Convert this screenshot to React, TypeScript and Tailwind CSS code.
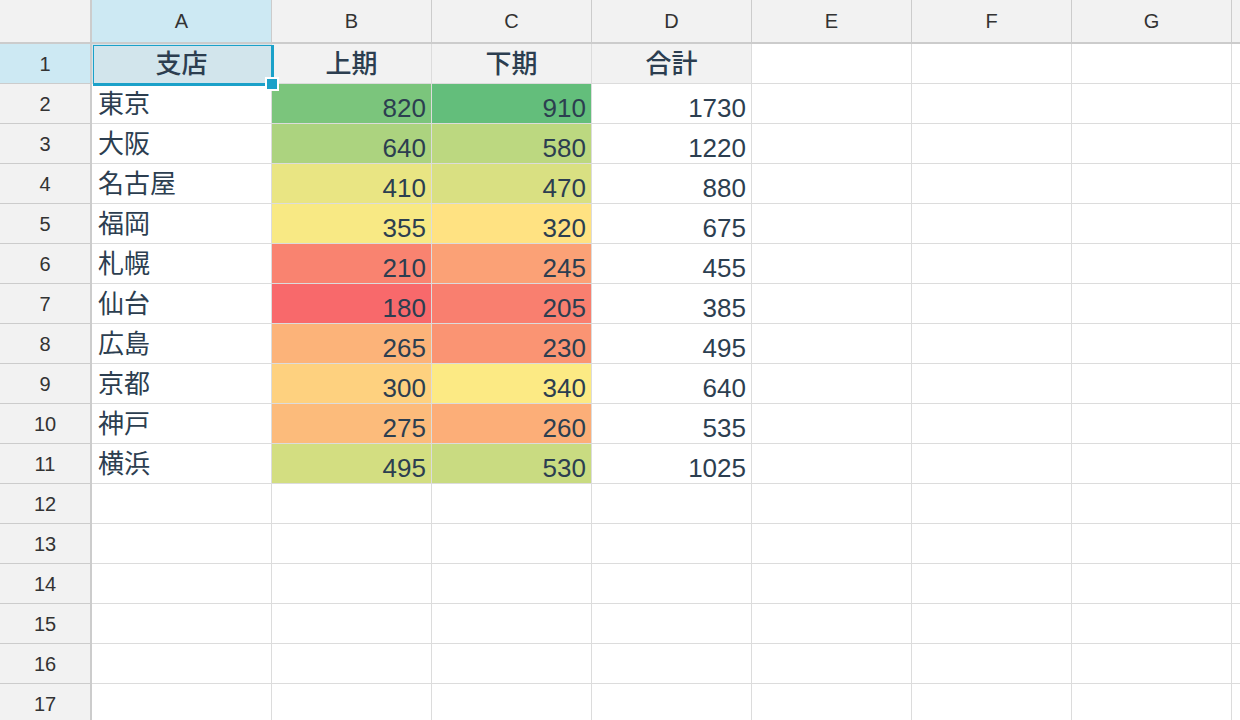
import React from "react";

type Row = [string, number, number];

const DATA: Row[] = [
  ["東京", 820, 910],
  ["大阪", 640, 580],
  ["名古屋", 410, 470],
  ["福岡", 355, 320],
  ["札幌", 210, 245],
  ["仙台", 180, 205],
  ["広島", 265, 230],
  ["京都", 300, 340],
  ["神戸", 275, 260],
  ["横浜", 495, 530],
];

// the last column only peeks in at the right edge, so its letter stays blank
const COLS = ["A", "B", "C", "D", "E", "F", "G", ""];
const ROW_COUNT = 17;

// three-colour scale: red (min) → yellow (median) → green (max)
const allValues = DATA.flatMap((r) => [r[1], r[2]]).sort((a, b) => a - b);
const MIN = allValues[0];
const MAX = allValues[allValues.length - 1];
const MID = (allValues[9] + allValues[10]) / 2;
const RED = [248, 105, 107];
const YELLOW = [255, 235, 132];
const GREEN = [99, 190, 123];

function mix(a: number[], b: number[], t: number) {
  const c = a.map((v, i) => Math.round(v + (b[i] - v) * t));
  return `rgb(${c[0]}, ${c[1]}, ${c[2]})`;
}

function scaleColor(v: number) {
  if (v <= MID) return mix(RED, YELLOW, (v - MIN) / (MID - MIN));
  return mix(YELLOW, GREEN, (v - MID) / (MAX - MID));
}

const font = { fontFamily: '"Liberation Sans", "Noto Sans CJK JP", Arial, sans-serif' };

function Cell({ col, row }: { col: number; row: number }) {
  const base =
    "border-r border-b border-[#dcdcdc] text-[26px] leading-none text-[#2c3e50] overflow-hidden whitespace-nowrap";
  if (row === 1) {
    const labels = ["支店", "上期", "下期", "合計"];
    if (col === 0) {
      return (
        <div className={`${base} flex items-center justify-center bg-[#d2e5ec] font-medium`}>
          {labels[col]}
        </div>
      );
    }
    if (col < 4) {
      return (
        <div className={`${base} flex items-center justify-center bg-[#f2f2f2] font-medium`}>
          {labels[col]}
        </div>
      );
    }
    return <div className={`${base} bg-white`} />;
  }
  const d = DATA[row - 2];
  if (!d || col > 3) return <div className={`${base} bg-white`} />;
  if (col === 0) {
    return <div className={`${base} flex items-start bg-white pl-[6px] pt-[7px]`}>{d[0]}</div>;
  }
  const value = col === 3 ? d[1] + d[2] : d[col];
  const bg = col === 3 ? undefined : { backgroundColor: scaleColor(value) };
  return (
    <div
      className={`${base} flex items-end justify-end pr-[5px] pb-[2px] ${col === 3 ? "bg-white" : ""}`}
      style={bg}
    >
      {value}
    </div>
  );
}

export default function App() {
  const rows = Array.from({ length: ROW_COUNT }, (_, i) => i + 1);
  return (
    <div className="relative w-[1240px] h-[720px] overflow-hidden bg-white" style={font}>
      <div className="grid grid-cols-[92px_180px_repeat(7,160px)] grid-rows-[44px_repeat(17,40px)] w-[1392px]">
        {/* corner */}
        <div className="bg-[#f2f2f2] border-r-2 border-b-2 border-[#cccccc]" />
        {COLS.map((c, i) => (
          <div
            key={i}
            className={`flex items-center justify-center border-r border-b-2 border-[#cccccc] text-[20px] text-[#333333] ${
              i === 0 ? "bg-[#cde9f3]" : "bg-[#f2f2f2]"
            }`}
          >
            {c}
          </div>
        ))}
        {rows.map((r) => (
          <React.Fragment key={r}>
            <div
              className={`flex items-center justify-center border-r-2 border-b border-[#cccccc] text-[20px] text-[#333333] ${
                r === 1 ? "bg-[#cde9f3]" : "bg-[#f2f2f2]"
              }`}
            >
              {r}
            </div>
            {COLS.map((_, ci) => (
              <Cell key={ci} col={ci} row={r} />
            ))}
          </React.Fragment>
        ))}
      </div>

      {/* active cell outline with fill handle */}
      <div className="absolute left-[93px] top-[45px] w-[181px] h-[41px] border-l border-t border-r-[3px] border-b-[3px] border-[#1ba1c9] pointer-events-none" />
      <div className="absolute left-[265px] top-[77px] w-[14px] h-[14px] bg-[#1ba1c9] border-2 border-white" />
    </div>
  );
}
